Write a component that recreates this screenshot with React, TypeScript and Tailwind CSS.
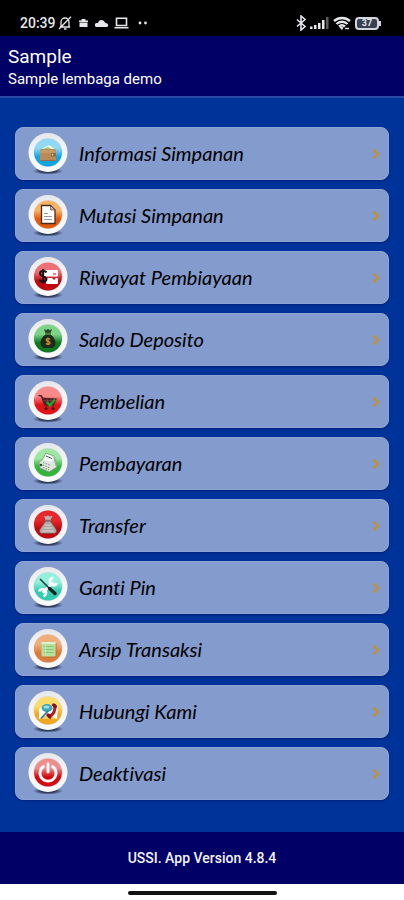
import type { ReactNode } from 'react'

interface BadgeProps {
  id: string
  from: string
  to: string
  children: ReactNode
}

interface MenuItem {
  label: string
  from: string
  to: string
  art: ReactNode
}

const menuItems: MenuItem[] = [
  {
    label: 'Informasi Simpanan',
    from: '#8fd8f6',
    to: '#12a5e4',
    art: (
      <>
        <path fill="#f4f6dc" d="M15 15l6-3 6 4v3H14z" />
        <path fill="#9ccb7a" d="M15 16l5-2 3 2z" />
        <rect x="12" y="16" width="16" height="12" rx="1.5" fill="#b98a55" />
        <path fill="#c79b66" d="M12.5 17h15v3h-15z" />
        <path fill="#9a6d3f" d="M12.5 27h15v1h-15zM23 20h5v3.5h-5z" />
        <circle cx="24.5" cy="21.8" r=".8" fill="#ecd3a6" />
      </>
    ),
  },
  {
    label: 'Mutasi Simpanan',
    from: '#f9b266',
    to: '#e25a0c',
    art: (
      <>
        <path fill="#fff" stroke="#4a2c1c" strokeWidth="1.3" d="M13.5 10.5h9l4.5 4.5v13.5H13.5z" />
        <path fill="#bbb" stroke="#4a2c1c" strokeWidth=".6" d="M22.5 10.5V15H27z" />
        <path stroke="#999" strokeWidth="1" d="M16 18.5h4M16 21.5h8M16 24.5h8" />
      </>
    ),
  },
  {
    label: 'Riwayat Pembiayaan',
    from: '#ee6f74',
    to: '#bd0910',
    art: (
      <>
        <rect x="16" y="13" width="14" height="6.5" rx="1" fill="#fff" />
        <rect x="18" y="21" width="12" height="6" rx="1" fill="#fff" />
        <path stroke="#d43b40" strokeWidth="1.2" d="M25 17h3" />
        <path fill="#c9151b" d="M24 21h4l-2 2z" />
        <path
          fill="none"
          stroke="#1b1416"
          strokeWidth="2"
          d="M18.5 15.5c-1-2-6.5-2.2-6.5 1 0 3.7 6.5 2 6.5 5.6 0 3.4-6 3.2-7 .6M15.2 12v14.5"
        />
      </>
    ),
  },
  {
    label: 'Saldo Deposito',
    from: '#7cd487',
    to: '#0b7a22',
    art: (
      <>
        <path fill="#2c4a2a" d="M16 10l2 1 2-1 2 1 2-1-1.5 4.5h-5z" />
        <path fill="#1e2b1c" d="M17.5 15.5h5c3 2 5 5 5 8.5 0 3-2 5-4 5h-7c-2 0-4-2-4-5 0-3.5 2-6.5 5-8.5z" />
        <path stroke="#5d6b35" strokeWidth="1" d="M17 15h6" />
        <path
          fill="none"
          stroke="#c98b2b"
          strokeWidth="1.4"
          d="M22 20.5c-.6-1.2-3.8-1.2-3.8.4 0 2 3.9 1.1 3.9 3.1 0 1.7-3.3 1.7-4.1.3M20 18.5v7.5"
        />
      </>
    ),
  },
  {
    label: 'Pembelian',
    from: '#f98a8a',
    to: '#e51318',
    art: (
      <>
        <path fill="none" stroke="#5a2323" strokeWidth="1.5" d="M10.5 14.5l3 .5 3.5 9.5h9" />
        <path fill="#4a2424" d="M13.5 16.5l15.5 1-3 6.5h-9.5z" />
        <path stroke="#a54848" strokeWidth=".5" d="M15 19.5h12M19 17v7M23 17.5V24" />
        <circle cx="18" cy="27.5" r="1.5" fill="#351515" />
        <circle cx="25" cy="27.5" r="1.5" fill="#351515" />
        <path fill="none" stroke="#1fae2b" strokeWidth="2.2" d="M19 21l3 3.5 5-6" />
      </>
    ),
  },
  {
    label: 'Pembayaran',
    from: '#9be8a0',
    to: '#2fb53c',
    art: (
      <>
        <path fill="#dfe6dd" stroke="#7b8f7b" strokeWidth=".7" d="M18 10l8 3 3 11-8 5-9-4-1-6 3-2z" />
        <path fill="#f8faf7" d="M18 11l7 3-1 5-8-2z" />
        <path stroke="#4a574b" strokeWidth="1" d="M18 13l6 2.5" />
        <path stroke="#8b998d" strokeWidth="1.2" strokeDasharray="1.4 1.4" d="M15 19.5l8 3M15 22l7 3M15 24.5l6 2.5" />
        <circle cx="13" cy="22" r="1.3" fill="#3a443b" />
        <path stroke="#9aaa9b" strokeWidth="1" d="M26 15l2 8" />
      </>
    ),
  },
  {
    label: 'Transfer',
    from: '#e8262b',
    to: '#bf0a10',
    art: (
      <>
        <path fill="#b7b3b0" d="M16 10.5l2 1 2-1 2 1 2.5-1-2 4.5h-5z" />
        <path fill="#aaa6a3" stroke="#7d3433" strokeWidth=".6" d="M17.5 16h5l5.5 8c1.5 2.5 0 4.5-2 4.5H14c-2 0-3.5-2-2-4.5z" />
        <path stroke="#77706e" strokeWidth="1.3" d="M17 15.5h6" />
        <path stroke="#dedad7" strokeWidth="1.2" d="M17 20h6M15.5 23h9M14 26h12" />
      </>
    ),
  },
  {
    label: 'Ganti Pin',
    from: '#93f0dd',
    to: '#35cbb0',
    art: (
      <>
        <path stroke="#fff" strokeWidth="2.8" d="M14.5 25.5l11-10" />
        <path fill="none" stroke="#fff" strokeWidth="2.6" d="M25.5 11a3.6 3.6 0 1 0 3.2 5M11 24.5a3.6 3.6 0 1 1 4.5 4.7" />
        <path stroke="#1e3e3b" strokeWidth="1.6" d="M12 12l9 9" />
        <path stroke="#14211f" strokeWidth="3.4" strokeLinecap="round" d="M21.5 21.5l5.5 5" />
      </>
    ),
  },
  {
    label: 'Arsip Transaksi',
    from: '#efae7c',
    to: '#dc7b3b',
    art: (
      <>
        <path fill="none" stroke="#b8703a" strokeWidth="1" d="M14 28h14V14" />
        <rect x="13.5" y="13" width="14" height="14.5" rx="1" fill="#b6dfa0" />
        <path fill="#dcf2cd" d="M13.5 13h14v2h-14z" />
        <path stroke="#86c475" strokeWidth="1" d="M15.5 17.5h10M15.5 20.5h10M15.5 23.5h10" />
        <path stroke="#cdebbc" strokeWidth=".8" d="M17.5 16v10" />
      </>
    ),
  },
  {
    label: 'Hubungi Kami',
    from: '#fbdc6a',
    to: '#efa81f',
    art: (
      <>
        <path fill="#fff" d="M11 18l5-4 14 1-1 13H11z" />
        <path fill="#f3cf74" d="M11 28l9-5 9 5z" />
        <ellipse cx="19" cy="17" rx="5.5" ry="4" fill="#39a5b5" />
        <ellipse cx="18.5" cy="16" rx="3" ry="1.6" fill="#a3dce0" />
        <path stroke="#31798f" strokeWidth="1.8" d="M20 20l-7 7.5" />
        <path fill="none" stroke="#b81d25" strokeWidth="3.2" strokeLinecap="round" d="M26.5 14.5c1.5 5-1.5 9.5-5 10.5" />
        <path stroke="#8d1219" strokeWidth="3.2" strokeLinecap="round" d="M25.5 14l2 1.5M20 24l2 2" />
      </>
    ),
  },
  {
    label: 'Deaktivasi',
    from: '#ee8d8d',
    to: '#d30a10',
    art: (
      <>
        <path fill="none" stroke="#fff" strokeWidth="2.8" strokeLinecap="round" d="M15.5 13.5a8 8 0 1 0 9 0" />
        <path stroke="#fff" strokeWidth="2.8" strokeLinecap="round" d="M20 11v8" />
      </>
    ),
  },
]

function Badge({ id, from, to, children }: BadgeProps) {
  return (
    <svg className="h-[42px] w-10 shrink-0" viewBox="0 0 40 42" aria-hidden="true">
      <defs>
        <linearGradient id={id} x1="0" y1="0" x2="0" y2="1">
          <stop offset="0" stopColor={from} />
          <stop offset=".35" stopColor={from} />
          <stop offset=".65" stopColor={to} />
          <stop offset="1" stopColor={to} />
        </linearGradient>
        <linearGradient id={`${id}-ring`} x1="0" y1="0" x2="0" y2="1">
          <stop offset="0" stopColor="#e6e7ea" />
          <stop offset=".4" stopColor="#f4f4f6" />
          <stop offset="1" stopColor="#fafafa" />
        </linearGradient>
        <radialGradient id={`${id}-shadow`}>
          <stop offset=".5" stopColor="#26314e" stopOpacity=".9" />
          <stop offset="1" stopColor="#26314e" stopOpacity="0" />
        </radialGradient>
      </defs>
      <ellipse cx="20" cy="38" rx="15" ry="3.6" fill={`url(#${id}-shadow)`} />
      <circle cx="20" cy="19.5" r="19.5" fill={`url(#${id}-ring)`} />
      <circle cx="20" cy="19.5" r="14.5" fill="#dcdde0" />
      <circle cx="20" cy="19.5" r="14" fill={`url(#${id})`} />
      {children}
    </svg>
  )
}

function StatusBar() {
  return (
    <div className="flex h-9 items-center justify-between bg-black pt-[10px] pr-[23px] pl-5 text-gray-200">
      <div className="flex items-center">
        <span className="text-sm font-medium">20:39</span>
        <svg className="ml-[2px] h-[14px] w-[14px]" viewBox="0 0 14 14" fill="none" stroke="currentColor" strokeWidth="1.3">
          <path d="M3 10.5V6a4 4 0 0 1 8 0v4.5l1 .5H2zM6 13h2.5M13 .8L1 13" />
        </svg>
        <svg className="ml-[6px] h-[10px] w-[11px]" viewBox="0 0 11 10" fill="currentColor">
          <path d="M3.5 1h4v1.5H10V4H1V2.5h2.5zM1.5 4.5h8V9h-8z" />
        </svg>
        <svg className="ml-[6px] h-[10px] w-[14px]" viewBox="0 0 14 10" fill="currentColor">
          <path d="M2 9a2 2 0 0 1-.3-4H3a3.5 3.5 0 0 1 6.5-1.2c.3.8 1 1.2 2 1.4A2 2 0 0 1 12 9z" />
        </svg>
        <svg className="ml-[5px] h-3 w-[15px]" viewBox="0 0 15 12" fill="none" stroke="currentColor" strokeWidth="1.6">
          <path d="M2.5 1.2h10v7.3h-10zM.5 10.7h14" />
        </svg>
        <svg className="ml-[9px] h-1 w-[10px]" viewBox="0 0 10 4" fill="currentColor">
          <circle cx="2" cy="2" r="1.4" />
          <circle cx="7.5" cy="2" r="1.4" />
        </svg>
      </div>
      <div className="flex items-center">
        <svg className="h-4 w-3" viewBox="0 0 12 16" fill="none" stroke="currentColor" strokeWidth="1.6">
          <path d="M2 4.5l8 7L6 15V1l4 3.5-8 7" />
        </svg>
        <svg className="ml-[3px] h-3 w-[19px]" viewBox="0 0 19 12" fill="currentColor">
          <path d="M0 9.5h2.5V12H0zM4 8h2.5v4H4zM8 6h2.5v6H8zM12 3h2.5v9H12z" />
          <path opacity=".4" d="M16 0h2.5v12H16z" />
        </svg>
        <svg className="ml-1 h-[14px] w-[18px]" viewBox="0 0 18 14" fill="none" stroke="currentColor" strokeWidth="2.4">
          <path d="M1 5a12 12 0 0 1 16 0M3.5 8a8 8 0 0 1 11 0M6 10.5a4.5 4.5 0 0 1 6 0" />
          <path fill="currentColor" stroke="none" d="M6.5 11.5a3.5 3.5 0 0 1 4 0L9 14z" />
          <path strokeWidth="1.4" d="M12 12.5h4" />
        </svg>
        <div className="ml-1 flex items-center">
          <span className="flex h-[13px] w-6 items-center justify-center rounded-sm border-2 border-gray-300 bg-gray-700 text-[9px] leading-none font-bold">
            37
          </span>
          <span className="h-[5px] w-[2px] bg-gray-300" />
        </div>
      </div>
    </div>
  )
}

export default function App() {
  return (
    <div className="flex min-h-screen flex-col bg-[#003399] font-['Roboto',sans-serif]">
      <StatusBar />

      <header className="border-b-2 border-[#2b4aa6] bg-[#000066] px-2 pt-[9px] pb-[7px] text-white">
        <h1 className="text-[19px] leading-6">Sample</h1>
        <p className="text-[15px] leading-5">Sample lembaga demo</p>
      </header>

      <main className="flex-1 px-[15px] pt-[29px] pb-8">
        <ul className="flex flex-col gap-[9px]">
          {menuItems.map((item, index) => (
            <li key={item.label}>
              <button
                type="button"
                className="flex h-[53px] w-full items-center rounded-lg border border-[#8ea5d3] bg-[#839bcd] pr-2 pl-3 text-left shadow-[0_1px_2px_#001f7a]"
              >
                <Badge id={`badge-${index}`} from={item.from} to={item.to}>
                  {item.art}
                </Badge>
                <span className="ml-[11px] flex-1 pb-[2px] font-['Lato',sans-serif] text-xl leading-6 text-black italic [font-variant-ligatures:none]">
                  {item.label}
                </span>
                <svg className="h-3 w-2" viewBox="0 0 8 12" fill="none" stroke="#bf9238" strokeWidth="2.4" aria-hidden="true">
                  <path d="M1.5 1.5L6 6l-4.5 4.5" />
                </svg>
              </button>
            </li>
          ))}
        </ul>
      </main>

      <footer className="bg-[#000066] py-4 text-center text-sm leading-5 font-medium text-gray-100">
        USSI. App Version 4.8.4
      </footer>
      <div className="flex h-[17px] justify-center bg-white pt-[7px]">
        <div className="h-1 w-[149px] rounded-full bg-[#111]" />
      </div>
    </div>
  )
}
